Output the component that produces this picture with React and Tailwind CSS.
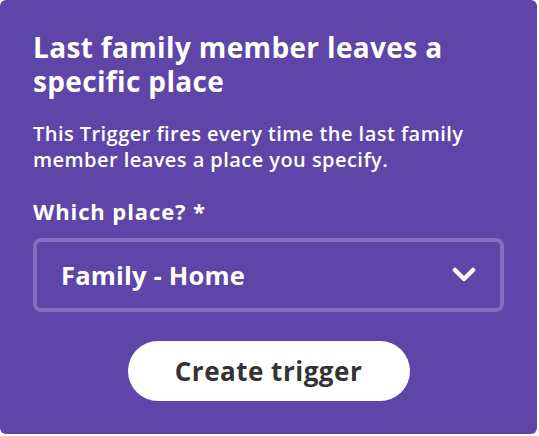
import React from 'react';

function App() {
  return (
    <div className="w-[537px] h-[434px] rounded-md bg-[#5d46a8] px-[33px] pt-[30px] text-white" style={{ fontFamily: '"Open Sans", "Noto Sans", sans-serif' }}>
      <h1 className="max-w-[430px] text-[28px] font-bold leading-[34px] tracking-[0.35px]">
        Last family member leaves a specific place
      </h1>
      <p className="mt-[23px] max-w-[460px] text-[20px] font-semibold leading-[26px] tracking-[0.45px]">
        This Trigger fires every time the last family member leaves a place you specify.
      </p>
      <label className="mt-[24px] block text-[22px] font-bold leading-[28px] tracking-[0.9px]">Which place? *</label>
      <div className="mt-[13px] flex h-[74px] w-[471px] items-center justify-between rounded-lg border-4 border-[#8170bf] pl-[24px] pr-[24px]">
        <span className="text-[25.5px] font-bold tracking-[0.2px]">Family - Home</span>
        <svg width="24" height="16" viewBox="0 0 24 16" fill="none">
          <path d="M3 3l9 9 9-9" stroke="white" strokeWidth="4.5" strokeLinecap="round" strokeLinejoin="round" />
        </svg>
      </div>
      <div className="mt-[29px] flex justify-center">
        <button className="h-[60px] w-[282px] rounded-full bg-white text-[26px] font-bold tracking-[0.5px] text-[#333333]">
          Create trigger
        </button>
      </div>
    </div>
  );
}

export default App;
